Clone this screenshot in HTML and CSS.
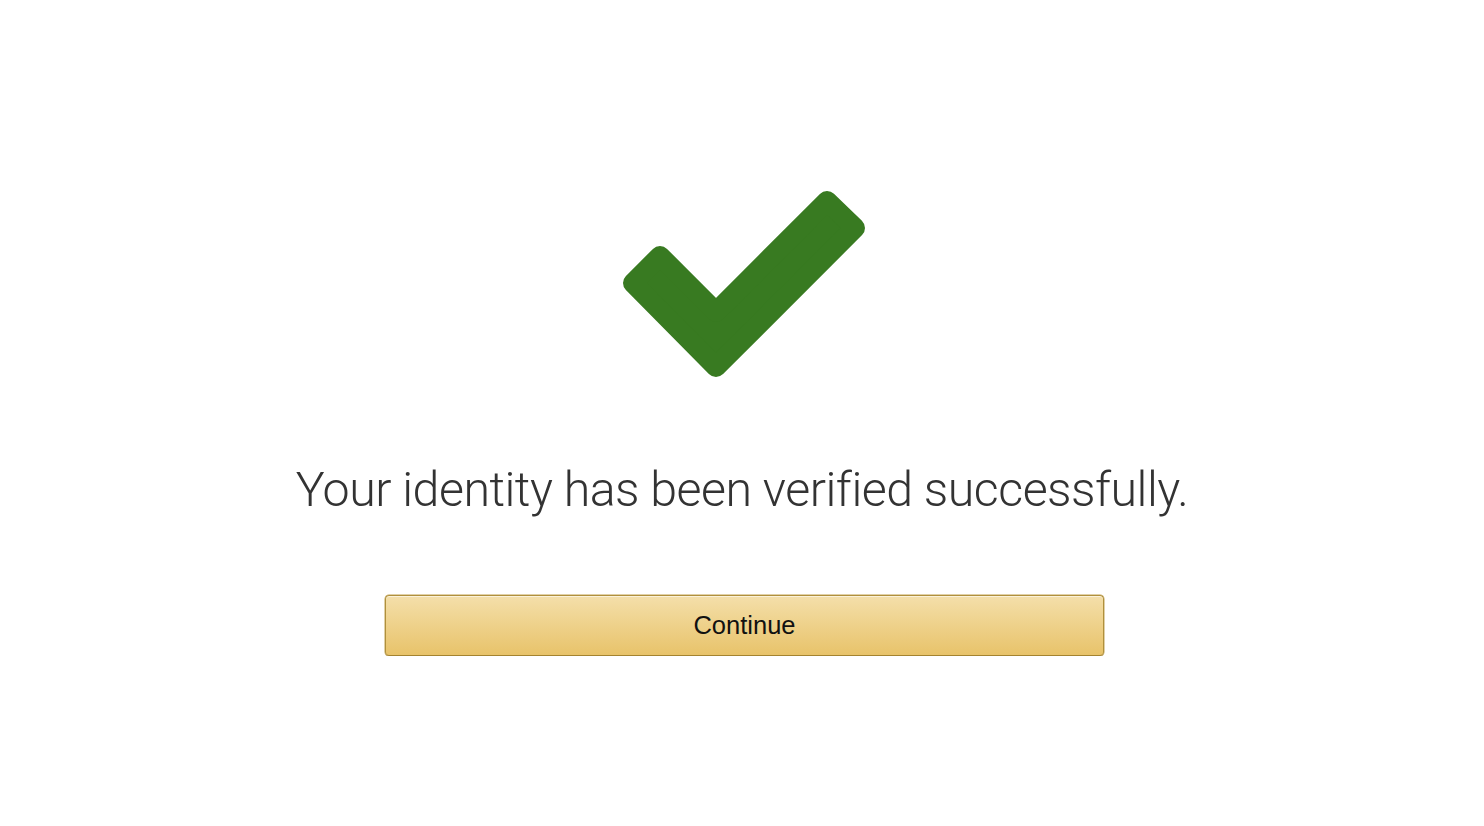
FILE: index.html
```html
<!DOCTYPE html>
<html lang="en">
<head>
  <meta charset="UTF-8" />
  <title>Identity verified</title>
  <link rel="stylesheet" href="styles.css">
</head>
<body>
  <main class="verified">
    <svg class="check" width="290" height="230" viewBox="597 170 290 230" aria-hidden="true">
      <polygon points="660,256 633,283 716,367 855,228 827,201 716,312"
               fill="#387a21" stroke="#387a21" stroke-width="20" stroke-linejoin="round" />
    </svg>

    <h1 class="message">Your identity has been verified successfully.</h1>

    <button class="continue-btn" type="button">Continue</button>
  </main>
</body>
</html>
```

FILE: styles.css
```css
body {
  margin: 0;
  background-color: white;
  font-family: "Liberation Sans", Arial, sans-serif;
}

.verified {
  display: flex;
  flex-direction: column;
  align-items: center;
  padding-top: 170px;
}

.check {
  display: block;
}

.message {
  margin: 60px 0 0;
  font-family: Roboto, "Liberation Sans", sans-serif;
  font-weight: 300;
  font-size: 48.3px;
  line-height: 60px;
  color: #333;
  letter-spacing: -0.5px;
}

.continue-btn {
  margin-top: 75px;
  width: 719px;
  height: 61px;
  margin-left: 5px;
  border: 1px solid #b0903c;
  border-bottom-color: #a4832f;
  border-radius: 4px;
  background: linear-gradient(to bottom, #f4dfaa, #e8c36a);
  box-shadow: inset 0 1px 0 rgba(255, 255, 255, 0.55), 0 0 0 0.5px #c2a150;
  font-family: "Liberation Sans", Arial, sans-serif;
  font-size: 25.5px;
  color: #111;
  cursor: pointer;
}
```
